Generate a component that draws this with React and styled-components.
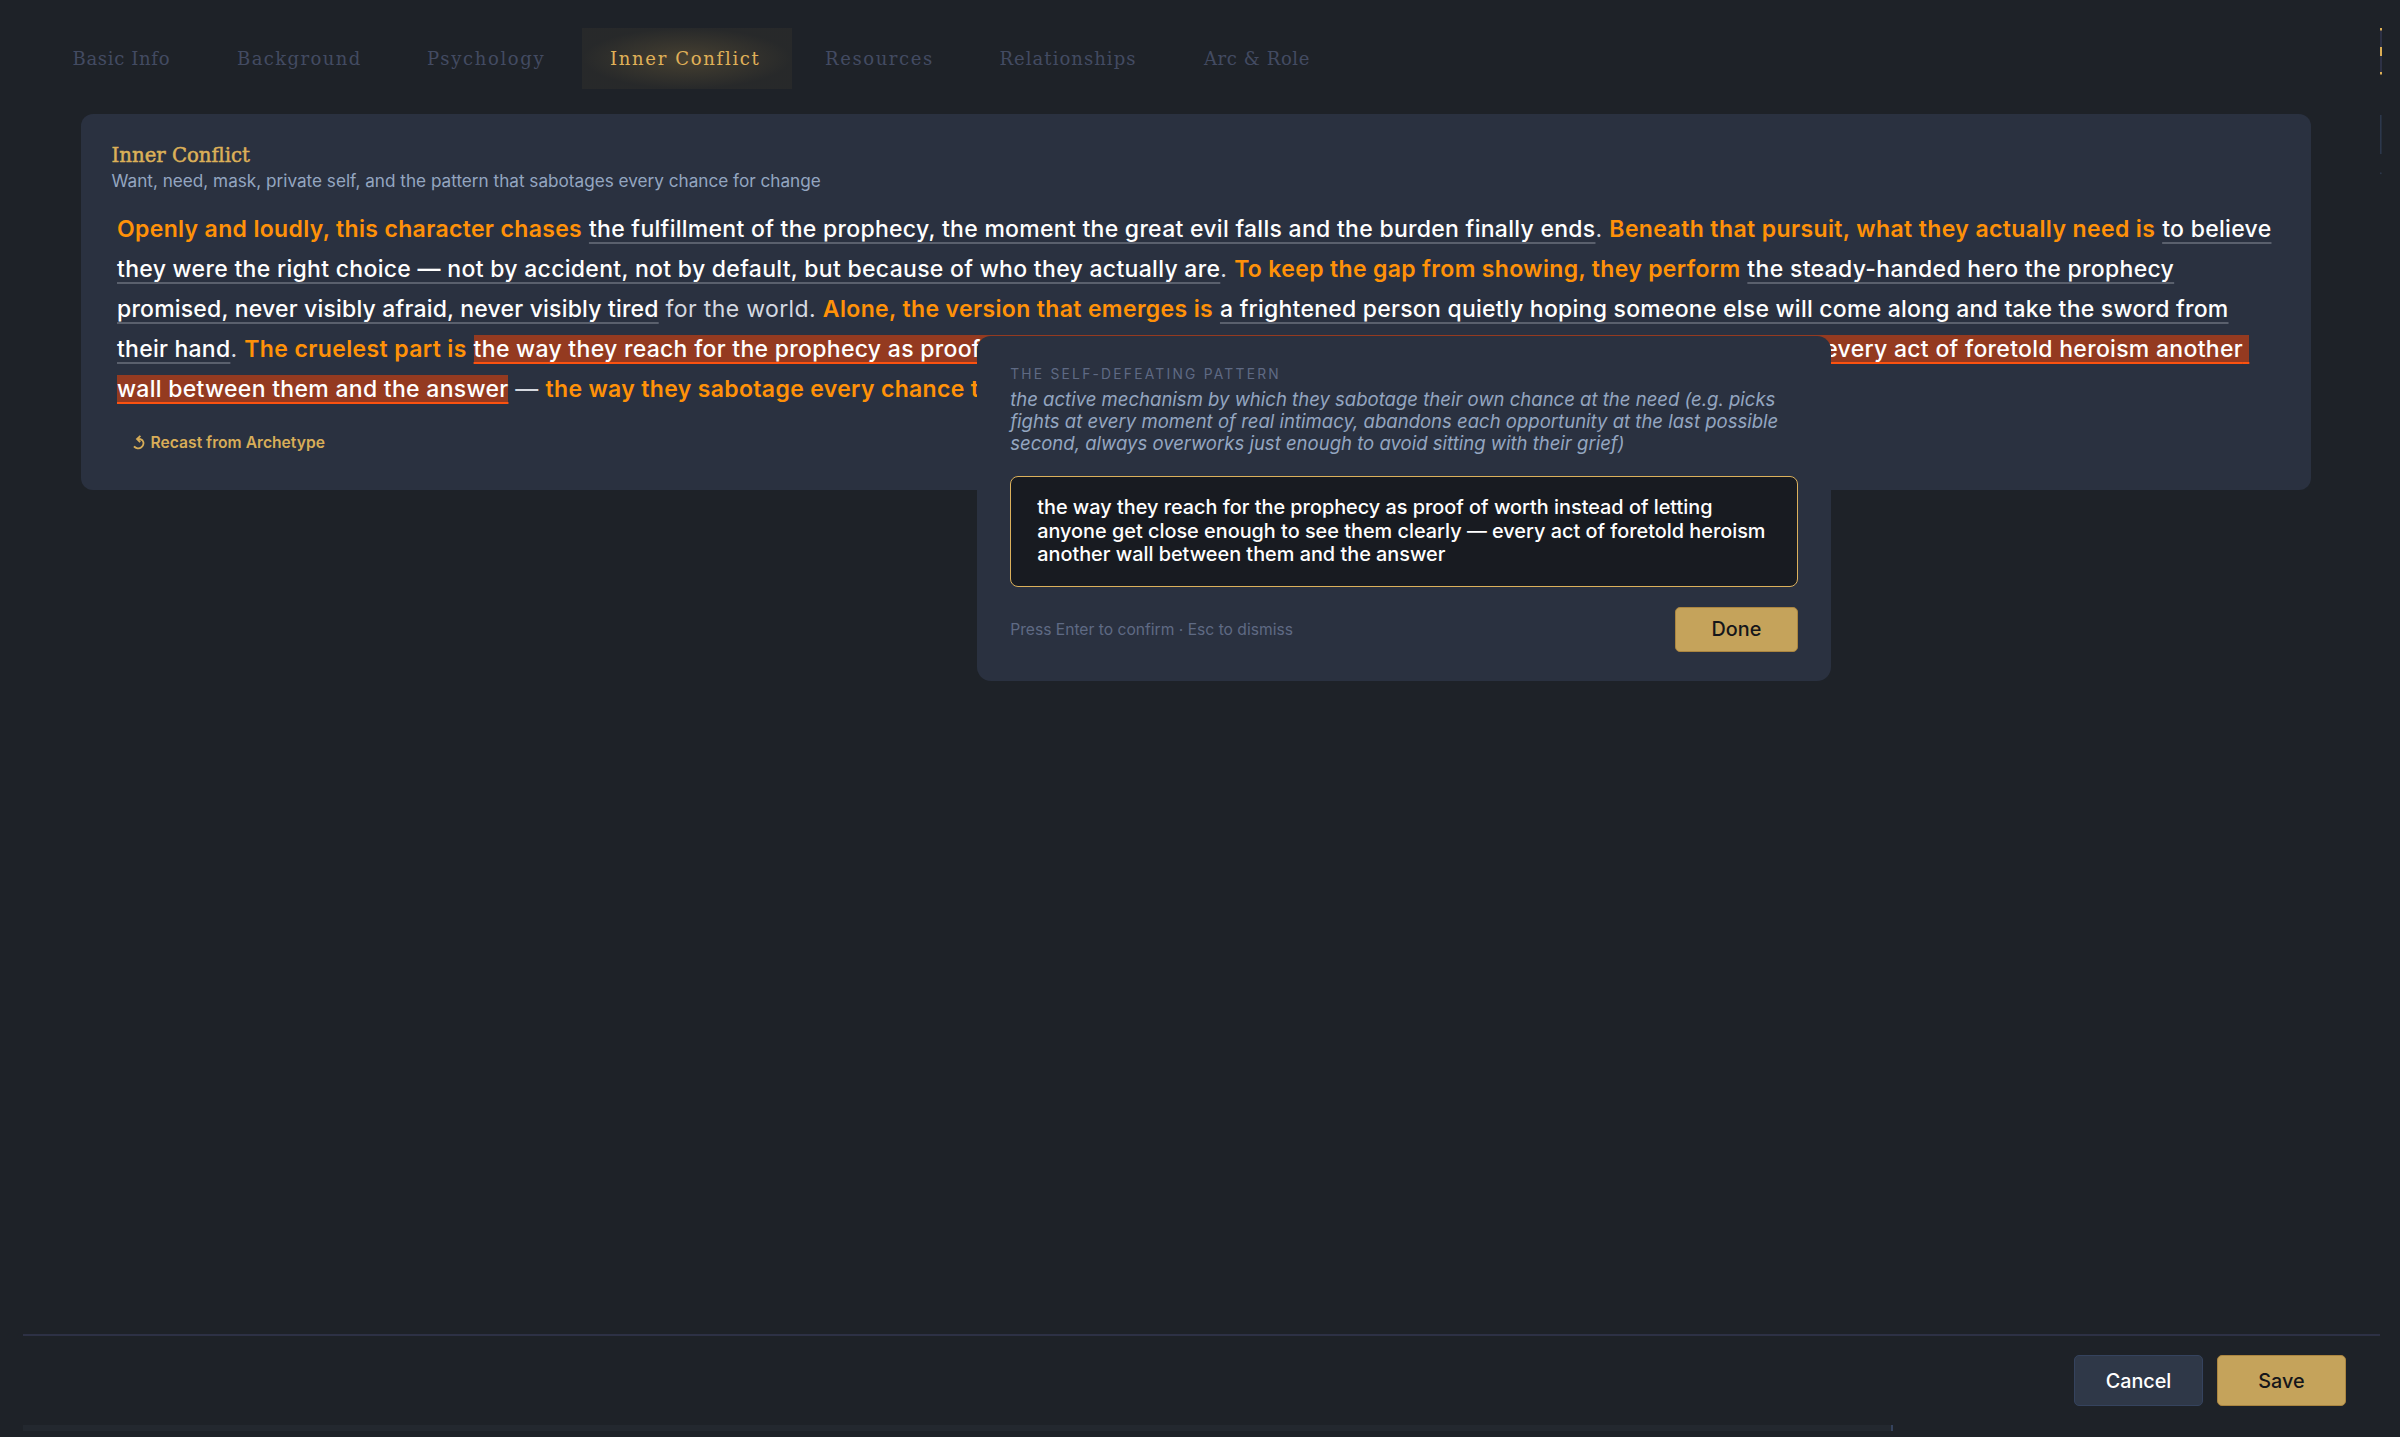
import React from "react";
import styled, { createGlobalStyle, css } from "styled-components";

const GlobalStyle = createGlobalStyle`
  * { box-sizing: border-box; }
  body {
    margin: 0;
    background: #1e2228;
    font-family: Inter, "Liberation Sans", sans-serif;
    color: #fff;
    overflow: hidden;
  }
`;

const Page = styled.div`
  display: flex;
  flex-direction: column;
  height: 1437px;
  padding: 0 16px 0 23px;
`;

const Workspace = styled.div`
  flex: 1;
  display: flex;
  justify-content: space-between;
`;

const Main = styled.main`
  width: 2288px;
`;

const TabBar = styled.nav`
  display: flex;
  gap: 5px;
  padding: 28px 0 0 21px;
  height: 114px;
`;

const Tab = styled.button`
  width: ${(p) => p.$width}px;
  height: 61px;
  padding: 0 0 0 28.5px;
  border: 0;
  background: none;
  text-align: left;
  white-space: nowrap;
  font: 400 18px/59px "DejaVu Serif", serif;
  letter-spacing: ${(p) => p.$tracking}px;
  color: #434b62;
  ${(p) =>
    p.$active &&
    css`
      color: #e0b158;
      background: radial-gradient(ellipse at center, rgba(212, 170, 80, 0.22) 0%, rgba(212, 170, 80, 0.05) 70%);
    `}
`;

const Card = styled.section`
  position: relative;
  margin-left: 58px;
  height: 376px;
  padding: 30px 34px 0 30.5px;
  border-radius: 12px;
  background: #2a3140;
`;

const Title = styled.h2`
  margin: 0;
  font: 400 19.7px/24px "DejaVu Serif", serif;
  -webkit-text-stroke: 0.5px #dcb058;
  color: #dcb058;
`;

const Subtitle = styled.p`
  margin: 1px 0 0;
  font-size: 17.16px;
  line-height: 24px;
  color: #94a6c0;
`;

const Story = styled.p`
  margin: 15.6px 0 0 5.5px;
  font-size: 23px;
  line-height: 40px;
  letter-spacing: 0.37px;
  color: #d5d9e0;
`;

const Lead = styled.strong`
  font-weight: 600;
  letter-spacing: ${(p) => p.$tracking ?? 0.34}px;
  color: #ff9108;
`;

const Slot = styled.span`
  color: #fff;
  font-weight: 500;
  letter-spacing: ${(p) => p.$tracking ?? 0.28}px;
  text-decoration: underline 2px #5a606d;
  text-underline-offset: 5px;
  text-decoration-skip-ink: none;
  ${(p) =>
    p.$selected &&
    css`
      white-space: pre-wrap;
      background: #943a20;
      text-decoration-color: #fb5210;
    `}
`;

const Recast = styled.button`
  display: flex;
  align-items: center;
  gap: 5px;
  margin: 24.8px 0 0 21px;
  padding: 0;
  border: 0;
  background: none;
  font: 600 15.66px/20px Inter, sans-serif;
  color: #d8ad58;
`;

const Popover = styled.div`
  position: absolute;
  left: 896.2px;
  top: 221.5px;
  width: 854px;
  height: 345.5px;
  padding: 27.5px 33px 0;
  border-radius: 14px;
  background: #2a3140;
`;

const Label = styled.div`
  font-size: 13.8px;
  line-height: 22px;
  letter-spacing: 2.24px;
  text-transform: uppercase;
  color: #5f6a84;
`;

const Hint = styled.p`
  margin: 3px 0 0;
  font-size: 18.54px;
  line-height: 22.2px;
  font-style: italic;
  color: #94a6c0;
`;

const Field = styled.div`
  margin-top: 21px;
  height: 111.5px;
  padding: 19px 20px 0 26px;
  border: 1.5px solid #dcb15c;
  border-radius: 8px;
  background: #181b21;
  font-size: 19.85px;
  font-weight: 500;
  line-height: 23.9px;
`;

const Actions = styled.div`
  display: flex;
  align-items: center;
  justify-content: space-between;
  margin-top: 20px;
`;

const KeyHint = styled.span`
  font-size: 15.64px;
  color: #5f6a84;
`;

const Button = styled.button`
  width: ${(p) => p.$width}px;
  height: ${(p) => p.$height}px;
  padding: 0;
  border: 1px solid ${(p) => (p.$primary ? "#ab8540" : "#35435e")};
  border-radius: 5px;
  background: ${(p) => (p.$primary ? "#c5a35b" : "#2f3848")};
  color: ${(p) => (p.$primary ? "#15161a" : "#fff")};
  font: 500 19.8px Inter, sans-serif;
`;

const Rail = styled.svg`
  width: 6px;
  height: 180px;
`;

const Footer = styled.footer`
  display: flex;
  justify-content: flex-end;
  gap: 14px;
  height: 91px;
  margin-right: 4px;
  padding: 19px 34px 0 0;
  border-top: 2px solid #2d3145;
`;

const Progress = styled.div`
  width: 1870px;
  height: 6px;
  margin-bottom: 6px;
  border-right: 2px solid #35435e;
  background: #23282f;
`;

const tabs = [
  { name: "Basic Info", width: 159.5, tracking: 0.67 },
  { name: "Background", width: 185, tracking: 1.4 },
  { name: "Psychology", width: 178, tracking: 1.65 },
  { name: "Inner Conflict", width: 210, tracking: 1.68 },
  { name: "Resources", width: 169.5, tracking: 1.6 },
  { name: "Relationships", width: 199.5, tracking: 1.04 },
  { name: "Arc & Role", width: 165, tracking: 0.6 },
];

const pattern =
  "the way they reach for the prophecy as proof of worth instead of letting anyone get close enough to see them clearly — every act of foretold heroism another wall between them and the answer";

function RecastIcon() {
  return (
    <svg width="13" height="16" viewBox="0 0 13 16" fill="none" stroke="currentColor" strokeWidth="1.8">
      <path d="M1 11.4A5.2 5 0 1 0 9.4 5.2Q7.8 4 4.6 4" />
      <path d="M7.4 0.8 4 4 7.2 7.2" />
    </svg>
  );
}

function Ornaments() {
  return (
    <Rail viewBox="0 0 6 180">
      <rect x="2" y="30" width="2" height="43" fill="#2d3145" />
      <rect x="2" y="28" width="2" height="2.5" fill="#dcae55" />
      <rect x="2" y="47" width="2" height="9" fill="#dcae55" />
      <rect x="2" y="72" width="2" height="2.5" fill="#dcae55" />
      <rect x="2" y="115" width="1.6" height="39" fill="#2c374b" />
      <rect x="2" y="172.5" width="1.6" height="1.6" fill="#2c374b" />
    </Rail>
  );
}

export default function App() {
  return (
    <>
      <GlobalStyle />
      <Page>
        <Workspace>
          <Main>
            <TabBar>
              {tabs.map((t) => (
                <Tab key={t.name} $width={t.width} $tracking={t.tracking} $active={t.name === "Inner Conflict"}>
                  {t.name}
                </Tab>
              ))}
            </TabBar>
            <Card>
              <Title>Inner Conflict</Title>
              <Subtitle>Want, need, mask, private self, and the pattern that sabotages every chance for change</Subtitle>
              <Story>
                <Lead>Openly and loudly, this character chases</Lead>{" "}
                <Slot>the fulfillment of the prophecy, the moment the great evil falls and the burden finally ends</Slot>
                {". "}
                <Lead $tracking={0.39}>Beneath that pursuit, what they actually need is</Lead>{" "}
                <Slot $tracking={0.3}>to believe they were the right choice — not by accident, not by default, but because of who they actually are</Slot>
                {". "}
                <Lead>To keep the gap from showing, they perform</Lead>{" "}
                <Slot $tracking={0.32}>the steady-handed hero the prophecy </Slot>
                <Slot $tracking={0.19}>promised, never visibly afraid, never visibly tired</Slot>
                {" for the world. "}
                <Lead $tracking={0.36}>Alone, the version that emerges is</Lead>{" "}
                <Slot $tracking={0.24}>a frightened person quietly hoping someone else will come along and take the sword from their hand</Slot>
                {". "}
                <Lead $tracking={0.38}>The cruelest part is</Lead>{" "}
                <Slot $selected $tracking={0.29}>{pattern}</Slot>
                {" — "}
                <Lead>the way they sabotage every chance they get</Lead>.
              </Story>
              <Recast>
                <RecastIcon />
                Recast from Archetype
              </Recast>
              <Popover>
                <Label>The self-defeating pattern</Label>
                <Hint>
                  the active mechanism by which they sabotage their own chance at the need (e.g. picks fights at every
                  moment of real intimacy, abandons each opportunity at the last possible second, always overworks just
                  enough to avoid sitting with their grief)
                </Hint>
                <Field>{pattern}</Field>
                <Actions>
                  <KeyHint>Press Enter to confirm · Esc to dismiss</KeyHint>
                  <Button $primary $width={123.5} $height={44.5}>
                    Done
                  </Button>
                </Actions>
              </Popover>
            </Card>
          </Main>
          <Ornaments />
        </Workspace>
        <Footer>
          <Button $width={129} $height={51}>
            Cancel
          </Button>
          <Button $primary $width={129} $height={51}>
            Save
          </Button>
        </Footer>
        <Progress />
      </Page>
    </>
  );
}
